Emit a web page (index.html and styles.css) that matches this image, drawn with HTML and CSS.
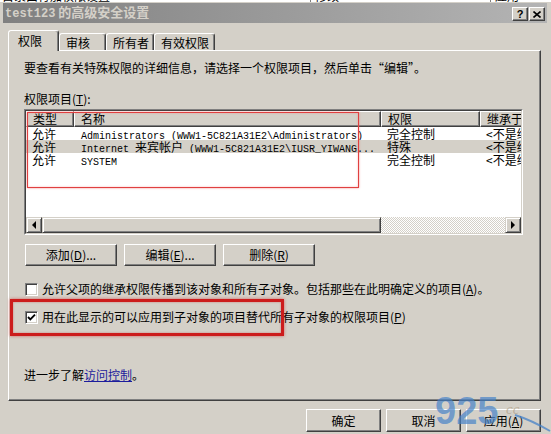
FILE: index.html
```html
<!DOCTYPE html>
<html lang="zh-CN">
<head>
    <meta charset="UTF-8">
    <title>test123 的高级安全设置</title>
    <link rel="stylesheet" href="styles.css">
</head>
<body>
    <div class="behind">
        <span class="behind-text">目录由行加权限设置</span>
        <span class="behind-col">修改</span>
        <span class="behind-col last">应用</span>
    </div>

    <div class="window">
        <div class="titlebar">
            <span class="title"><span class="en">test123</span> 的高级安全设置</span>
            <div class="caption-buttons">
                <div class="cap-btn">?</div>
                <div class="cap-btn">
                    <svg width="8" height="7" viewBox="0 0 8 7"><path d="M0.5 0.5 L7.5 6.5 M7.5 0.5 L0.5 6.5" stroke="#000" stroke-width="1.6"/></svg>
                </div>
            </div>
        </div>

        <div class="tabs">
            <div class="tab active">权限</div>
            <div class="tab w-audit">审核</div>
            <div class="tab w-owner">所有者</div>
            <div class="tab w-eff">有效权限</div>
        </div>

        <div class="panel">
            <p class="intro">要查看有关特殊权限的详细信息，请选择一个权限项目，然后单击“编辑”。</p>
            <p class="label">权限项目(<u>T</u>):</p>

            <div class="listview">
                <div class="lv-inner">
                    <div class="lv-header">
                        <div class="hcol c1">类型</div>
                        <div class="hcol c2">名称</div>
                        <div class="hcol c3">权限</div>
                        <div class="hcol c4">继承于</div>
                    </div>
                    <div class="lv-body">
                        <div class="row">
                            <div class="col c1">允许</div>
                            <div class="col c2"><span class="en">Administrators (WWW1-5C821A31E2\Administrators)</span></div>
                            <div class="col c3">完全控制</div>
                            <div class="col c4">&lt;不是继承的&gt;</div>
                        </div>
                        <div class="row selected">
                            <div class="col c1">允许</div>
                            <div class="col c2"><span class="en">Internet </span>来宾帐户<span class="en"> (WWW1-5C821A31E2\IUSR_YIWANG...</span></div>
                            <div class="col c3">特殊</div>
                            <div class="col c4">&lt;不是继承的&gt;</div>
                        </div>
                        <div class="row">
                            <div class="col c1">允许</div>
                            <div class="col c2"><span class="en">SYSTEM</span></div>
                            <div class="col c3">完全控制</div>
                            <div class="col c4">&lt;不是继承的&gt;</div>
                        </div>
                    </div>
                    <div class="hscroll">
                        <div class="sb-btn">
                            <svg width="14" height="14" viewBox="0 0 14 14"><polygon points="5,7 9,3 9,11" fill="#000"/></svg>
                        </div>
                        <div class="sb-thumb"></div>
                        <div class="sb-track"></div>
                        <div class="sb-btn">
                            <svg width="14" height="14" viewBox="0 0 14 14"><polygon points="9,7 5,3 5,11" fill="#000"/></svg>
                        </div>
                    </div>
                </div>
            </div>

            <div class="actions">
                <div class="btn">添加(<u>D</u>)...</div>
                <div class="btn">编辑(<u>E</u>)...</div>
                <div class="btn">删除(<u>R</u>)</div>
            </div>

            <div class="check first">
                <span class="box"></span>
                <span>允许父项的继承权限传播到该对象和所有子对象。包括那些在此明确定义的项目(<u>A</u>)。</span>
            </div>
            <div class="check second">
                <span class="box">
                    <svg width="9" height="9" viewBox="0 0 9 9"><path d="M1 4 L3.3 6.3 L8 1.6" fill="none" stroke="#000" stroke-width="1.9"/></svg>
                </span>
                <span>用在此显示的可以应用到子对象的项目替代所有子对象的权限项目(<u>P</u>)</span>
            </div>

            <p class="more">进一步了解<a href="#">访问控制</a>。</p>
        </div>

        <div class="footer">
            <div class="btn wide">确定</div>
            <div class="btn wide">取消</div>
            <div class="btn wide">应用(<u>A</u>)</div>
        </div>
    </div>

    <!-- highlight frames drawn over the dialog -->
    <div class="mark mark-list"></div>
    <div class="mark mark-check"></div>

    <div class="watermark">
        <span class="wm-num">925</span>
        <span class="wm-cc">cc</span>
        <svg class="wm-swoosh" width="40" height="20" viewBox="0 0 40 20"><path d="M2 2 Q 18 7 37 18" fill="none" stroke="rgba(70,130,200,0.75)" stroke-width="2"/></svg>
    </div>
</body>
</html>
```

FILE: styles.css
```css
* {
    box-sizing: border-box;
}
body {
    margin: 0;
    width: 551px;
    height: 434px;
    overflow: hidden;
    position: relative;
    background: #d4d0c8;
    color: #000;
    font: 12px/14px "Noto Sans CJK SC", "Liberation Sans", sans-serif;
}
p {
    margin: 0;
}
u {
    text-decoration: underline;
}
.en {
    font-family: "Liberation Mono", monospace;
    font-size: 10px;
}

/* window behind the dialog */
.behind {
    height: 3px;
    background: #fff;
    overflow: hidden;
    display: flex;
    border-bottom: 1px solid #d4d0c8;
}
.behind-text {
    display: block;
    width: 310px;
    margin-top: -10px;
    padding-left: 2px;
    line-height: 12px;
}
.behind-col {
    display: block;
    width: 180px;
    margin-top: -10px;
    padding-left: 4px;
    line-height: 12px;
    border-left: 1px solid #808080;
}
.behind-col.last {
    width: 60px;
}

/* dialog frame */
.window {
    padding: 0 4px 0 3px;
}
.titlebar {
    height: 20px;
    padding: 0 2px;
    display: flex;
    align-items: center;
    justify-content: space-between;
    background: linear-gradient(to right, #808080, #b4b4b4);
}
.title {
    color: #d4d0c8;
    font-weight: bold;
    font-size: 13px;
}
.title .en {
    font-size: 12px;
    font-weight: bold;
}
.caption-buttons {
    display: flex;
    gap: 1px;
    margin-top: 2px;
}
.cap-btn {
    width: 16px;
    height: 14px;
    display: flex;
    align-items: center;
    justify-content: center;
    background: #d4d0c8;
    border: 1px solid;
    border-color: #fff #404040 #404040 #fff;
    box-shadow: inset -1px -1px #808080;
    font: bold 11px/1 "Liberation Sans", sans-serif;
}

/* tabs */
.tabs {
    height: 27px;
    padding-left: 5px;
    display: flex;
    align-items: flex-end;
}
.tab {
    height: 17px;
    padding: 2px 0 0 6px;
    background: #d4d0c8;
    border: 1px solid;
    border-bottom: 0;
    border-color: #fff #404040 transparent #fff;
    border-radius: 3px 3px 0 0;
    box-shadow: inset -1px 0 #808080;
}
.tab.active {
    width: 51px;
    height: 21px;
    padding: 3px 0 0 9px;
    margin-bottom: -1px;
    position: relative;
    z-index: 1;
}
.w-audit {
    width: 47px;
}
.w-owner {
    width: 48px;
}
.w-eff {
    width: 61px;
}

/* tab page */
.panel {
    width: 533px;
    height: 351px;
    margin-left: 5px;
    padding-left: 15px;
    border: 1px solid;
    border-color: #fff #404040 #404040 #fff;
    box-shadow: inset -1px -1px #808080;
}
.intro {
    margin-top: 10px;
}
.label {
    margin-top: 17px;
}

/* list view */
.listview {
    width: 499px;
    height: 126px;
    margin-top: 3px;
    border: 1px solid;
    border-color: #808080 #fff #fff #808080;
}
.lv-inner {
    height: 100%;
    display: flex;
    flex-direction: column;
    overflow: hidden;
    border: 1px solid;
    border-color: #404040 #d4d0c8 #d4d0c8 #404040;
    background: #fff;
}
.lv-header {
    height: 16px;
    display: flex;
    flex-shrink: 0;
}
.hcol {
    height: 16px;
    flex-shrink: 0;
    padding-left: 6px;
    line-height: 14px;
    background: #d4d0c8;
    border: 1px solid;
    border-color: #fff #404040 #404040 #fff;
    box-shadow: inset -1px -1px #808080;
}
.c1 { width: 48px; }
.c2 { width: 307px; }
.c3 { width: 99px; }
.c4 { width: 120px; }
.lv-body {
    flex: 1;
}
.row {
    height: 13px;
    display: flex;
    white-space: nowrap;
}
.row.selected {
    background: #d4d0c8;
}
.col {
    flex-shrink: 0;
    padding-left: 6px;
    line-height: 13px;
    overflow: hidden;
}
.col.c2 {
    padding-left: 7px;
}
.hscroll {
    height: 16px;
    display: flex;
    flex-shrink: 0;
}
.sb-btn {
    width: 16px;
    height: 16px;
    background: #d4d0c8;
    border: 1px solid;
    border-color: #d4d0c8 #404040 #404040 #d4d0c8;
    box-shadow: inset 1px 1px #fff, inset -1px -1px #808080;
}
.sb-btn svg {
    display: block;
}
.sb-thumb {
    width: 339px;
    height: 16px;
    background: #d4d0c8;
    border: 1px solid;
    border-color: #d4d0c8 #404040 #404040 #d4d0c8;
    box-shadow: inset 1px 1px #fff, inset -1px -1px #808080;
}
.sb-track {
    flex: 1;
    background: repeating-conic-gradient(#fff 0 25%, #d4d0c8 0 50%) 0 0 / 2px 2px;
}

/* buttons */
.actions {
    margin-top: 9px;
    padding-left: 1px;
    display: flex;
    gap: 7px;
}
.btn {
    width: 92px;
    height: 22px;
    line-height: 20px;
    text-align: center;
    background: #d4d0c8;
    border: 1px solid;
    border-color: #fff #404040 #404040 #fff;
    box-shadow: inset -1px -1px #808080;
}
.btn.wide {
    width: 75px;
    height: 23px;
    line-height: 21px;
}

/* checkboxes */
.check {
    height: 14px;
    padding-left: 1px;
    display: flex;
    align-items: center;
    gap: 4px;
}
.check.first {
    margin-top: 16px;
}
.check.second {
    margin-top: 14px;
}
.box {
    width: 13px;
    height: 13px;
    display: flex;
    align-items: center;
    justify-content: center;
    background: #fff;
    border: 1px solid;
    border-color: #808080 #fff #fff #808080;
    box-shadow: inset 1px 1px #404040, inset -1px -1px #d4d0c8;
}
.more {
    margin-top: 44px;
}
.more a {
    color: #1c1c9c;
    text-decoration: underline;
}

/* footer */
.footer {
    margin-top: 8px;
    padding-right: 6px;
    display: flex;
    justify-content: flex-end;
    gap: 5px;
}

/* red annotation frames */
.mark {
    position: absolute;
    pointer-events: none;
}
.mark-list {
    left: 27px;
    top: 112px;
    width: 332px;
    height: 76px;
    border: 1px solid #e04040;
    box-shadow: 0 0 2px rgba(240, 100, 100, 0.7), inset 0 0 2px rgba(240, 120, 120, 0.6);
}
.mark-check {
    left: 10px;
    top: 299px;
    width: 274px;
    height: 37px;
    border: 3px solid #cc1c1c;
    box-shadow: 0 0 3px rgba(210, 30, 30, 0.6), inset 0 0 2px rgba(210, 30, 30, 0.5);
}

/* watermark */
.watermark {
    position: absolute;
    left: 435px;
    top: 391px;
    width: 116px;
    height: 43px;
    pointer-events: none;
}
.wm-num {
    position: absolute;
    left: 0;
    top: 0;
    font: bold 38px/40px "Liberation Sans", sans-serif;
    color: rgba(70, 130, 200, 0.7);
}
.wm-cc {
    position: absolute;
    left: 71px;
    top: 10px;
    font: italic 15px/16px "Liberation Serif", serif;
    color: rgba(170, 150, 120, 0.6);
}
.wm-swoosh {
    position: absolute;
    left: 78px;
    top: 22px;
}
```
